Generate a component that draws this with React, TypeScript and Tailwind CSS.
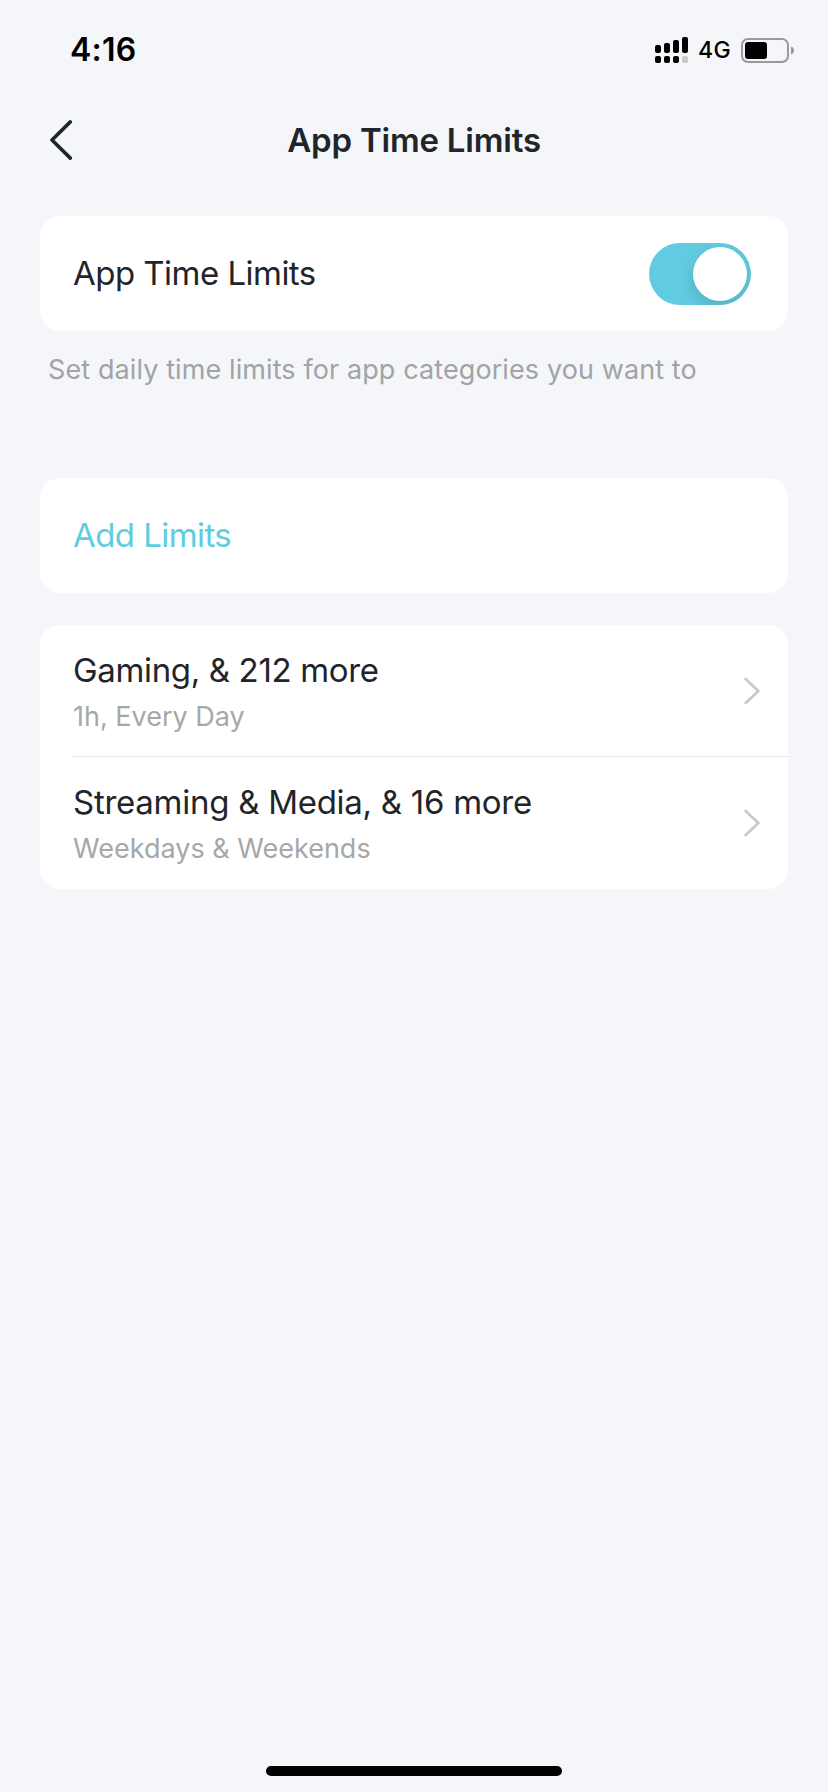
/**
 * App Time Limits settings screen.
 * Shows the feature switch, the "Add Limits" action and the list of saved limits.
 */
import { useState } from "react";

interface Limit {
  title: string;
  schedule: string;
  titleClass: string;
}

const limits: Limit[] = [
  {
    title: "Gaming, & 212 more",
    schedule: "1h, Every Day",
    titleClass: "tracking-[-0.35px]",
  },
  {
    title: "Streaming & Media, & 16 more",
    schedule: "Weekdays & Weekends",
    titleClass: "tracking-[-0.27px]",
  },
];

/**
 * Status bar with the clock, dual SIM signal and battery
 */
function StatusBar() {
  return (
    <div className="flex h-[100px] items-center justify-between pr-[34px] pl-[70px] text-black">
      <span className="text-[32px] leading-10 font-semibold tracking-[0.2px]">4:16</span>
      <div className="flex items-center">
        <svg width="33" height="26" viewBox="0 0 33 26">
          <rect x="0" y="8" width="6" height="8" rx="2" />
          <rect x="9" y="6" width="6" height="10" rx="2" />
          <rect x="18" y="3" width="6" height="13" rx="2" />
          <rect x="27" y="0" width="6" height="16" rx="2" />
          <rect x="0" y="19" width="6" height="7" rx="2" />
          <rect x="9" y="19" width="6" height="7" rx="2" />
          <rect x="18" y="19" width="6" height="7" rx="2" />
          <rect x="27" y="19" width="6" height="7" rx="2" fill="#c8c9cb" />
        </svg>
        <span className="ml-[10px] w-[34px] text-[23px] leading-8 font-medium tracking-[0.5px]">4G</span>
        <svg className="ml-[9px]" width="53" height="25" viewBox="0 0 53 25">
          <rect x="1" y="1" width="46" height="23" rx="6" fill="none" stroke="#98999b" strokeWidth="2" />
          <rect x="4" y="4" width="22" height="17" rx="3" />
          <path d="M50 8.5c2 .6 3 2.200 3 4s-1 3.400-3 4z" fill="#98999b" />
        </svg>
      </div>
    </div>
  );
}

/**
 * Grey chevron at the end of a list row
 */
function RowChevron() {
  return (
    <svg width="16" height="28" viewBox="0 0 16 28" fill="none" stroke="#c8c9ca" strokeWidth="2.800" strokeLinecap="round" strokeLinejoin="round">
      <path d="M1.700 1.900 14.300 14 1.700 26.100" />
    </svg>
  );
}

export default function App() {
  const [enabled, setEnabled] = useState(true);

  return (
    <div className="flex h-[1792px] w-[828px] flex-col bg-[#f4f6fa] font-['Inter',sans-serif] text-[#1f2529]">
      <StatusBar />

      {/* Navigation header */}
      <header className="grid h-20 grid-cols-[100px_1fr_100px] items-center">
        <button className="pl-[50px]" aria-label="Back">
          <svg width="23" height="40" viewBox="0 0 23 40" fill="none" stroke="#1f2529" strokeWidth="3.600" strokeLinecap="round" strokeLinejoin="round">
            <path d="M20.300 1.900 2 20l18.300 18.100" />
          </svg>
        </button>
        <h1 className="text-center text-[33px] leading-10 font-semibold tracking-[-0.2px]">App Time Limits</h1>
      </header>

      <main className="mt-9 px-10">
        {/* Feature switch */}
        <section className="flex h-[115px] items-center justify-between rounded-[20px] bg-white pr-[37px] pl-[33px]">
          <span className="pb-0.5 text-[33px] leading-10 tracking-[-0.53px]">App Time Limits</span>
          <button
            role="switch"
            aria-checked={enabled}
            onClick={() => setEnabled(!enabled)}
            className={`flex h-[62px] w-[102px] items-center overflow-hidden rounded-full px-1 ${enabled ? "justify-end bg-[#61cce1]" : "justify-start bg-gray-200"}`}
          >
            <span className="size-[54px] rounded-full bg-white shadow-[0_6px_16px_rgba(0,0,0,0.15)]" />
          </button>
        </section>
        <p className="mt-[19px] h-10 pl-2 text-[27px] leading-10 tracking-[0.1px] whitespace-nowrap text-[#a1a3a6]">
          Set daily time limits for app categories you want to
        </p>

        <button className="mt-[88px] flex h-[115px] w-full items-center rounded-[20px] bg-white pb-0.5 pl-[33px] text-[33px] leading-10 tracking-[-0.57px] text-[#61cce1]">
          Add Limits
        </button>

        {/* Saved limits */}
        <ul className="mt-8 h-[264px] overflow-hidden rounded-[20px] bg-white pl-8">
          {limits.map((limit) => (
            <li key={limit.title} className="flex h-[132px] items-center justify-between border-b border-[#e6e8e9] pr-7 pl-px last:border-b-0">
              <div className="whitespace-nowrap">
                <div className={`text-[33px] leading-[50px] ${limit.titleClass}`}>{limit.title}</div>
                <div className="h-[42px] text-[27px] leading-11 text-[#a5a8a9]">{limit.schedule}</div>
              </div>
              <RowChevron />
            </li>
          ))}
        </ul>
      </main>

      {/* Home indicator */}
      <div className="mx-auto mt-auto mb-4 h-[10px] w-[296px] rounded-full bg-black" />
    </div>
  );
}
